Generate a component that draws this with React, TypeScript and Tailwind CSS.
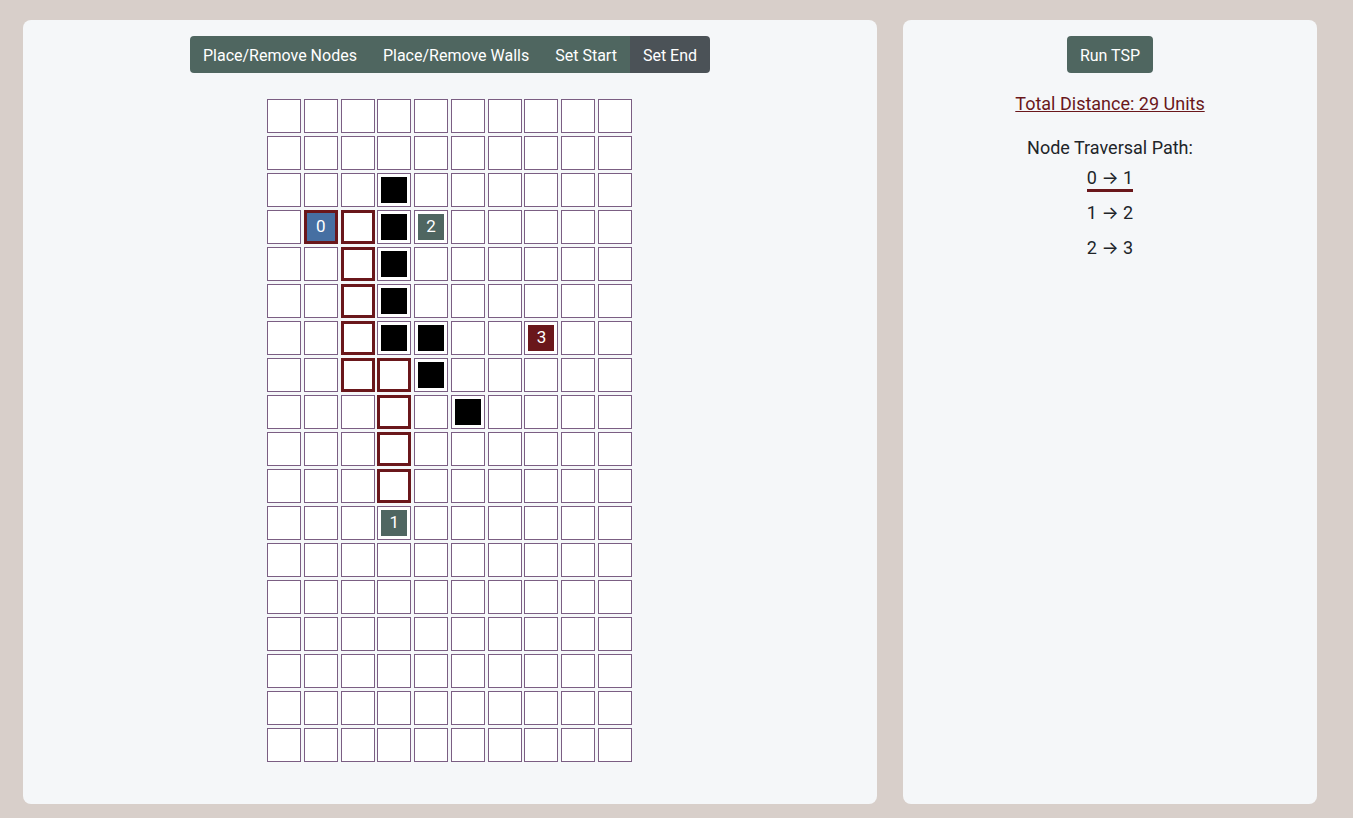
import React from "react";

const walls = new Set(["2,3", "3,3", "4,3", "5,3", "6,3", "6,4", "7,4", "8,5"]);
const paths = new Set(["3,1", "3,2", "4,2", "5,2", "6,2", "7,2", "7,3", "8,3", "9,3", "10,3"]);
const nodes: Record<string, { label: string; color: string }> = {
  "3,1": { label: "0", color: "bg-[#466fa2]" },
  "3,4": { label: "2", color: "bg-[#4f6661]" },
  "11,3": { label: "1", color: "bg-[#4f6661]" },
  "6,7": { label: "3", color: "bg-[#6a171b]" },
};

function Cell({ r, c }: { r: number; c: number }) {
  const key = `${r},${c}`;
  const isPath = paths.has(key);
  const node = nodes[key];
  const isWall = walls.has(key);
  if (isPath) {
    return (
      <div className="w-[34px] h-[34px] border-[3px] border-[#6a171b] bg-white flex items-center justify-center">
        {node ? (
          <div className={`w-full h-full ${node.color} flex items-center justify-center text-white text-[17px]`}>
            {node.label}
          </div>
        ) : null}
      </div>
    );
  }
  return (
    <div className="w-[34px] h-[34px] border border-[#7b5e83] bg-white p-[3px]">
      {isWall ? <div className="w-full h-full bg-black" /> : null}
      {node ? (
        <div className={`w-full h-full ${node.color} flex items-center justify-center text-white text-[17px]`}>
          {node.label}
        </div>
      ) : null}
    </div>
  );
}

function Step({ a, b }: { a: string; b: string }) {
  return (
    <>
      {a} <span style={{ fontFamily: "Inter, sans-serif" }}>→</span> {b}
    </>
  );
}

export default function App() {
  const rows = Array.from({ length: 18 }, (_, i) => i);
  const cols = Array.from({ length: 10 }, (_, i) => i);
  return (
    <div
      className="w-[1353px] h-[818px] bg-[#d8cfca] pl-[23px] pt-[20px] flex gap-[26px] text-[#212529]"
      style={{ fontFamily: "Roboto, 'Noto Sans', sans-serif" }}
    >
      <div className="w-[854px] h-[784px] bg-[#f5f7f9] rounded-[8px] flex flex-col items-center pt-[16px]">
        <div className="flex h-[37px] rounded-[4px] overflow-hidden text-[16px] text-white">
          <div className="bg-[#4f6660] px-[13px] pt-[2px] flex items-center">Place/Remove Nodes</div>
          <div className="bg-[#4f6660] px-[13px] pt-[2px] flex items-center">Place/Remove Walls</div>
          <div className="bg-[#4f6660] px-[13px] pt-[2px] flex items-center">Set Start</div>
          <div className="bg-[#4b5257] px-[13px] pt-[2px] flex items-center">Set End</div>
        </div>
        <div className="mt-[26px] ml-[-1px] grid grid-cols-[repeat(10,34px)] gap-x-[2.8px] gap-y-[3px]">
          {rows.map((r) => cols.map((c) => <Cell key={`${r}-${c}`} r={r} c={c} />))}
        </div>
      </div>
      <div className="w-[414px] h-[784px] bg-[#f5f7f9] rounded-[8px] flex flex-col items-center pt-[16px] text-[18px]">
        <div className="h-[37px] px-[13px] pt-[2px] bg-[#4f6660] text-white rounded-[4px] flex items-center text-[16px]">Run TSP</div>
        <div className="mt-[19px] text-[#6a171b] underline leading-[24px]">Total Distance: 29 Units</div>
        <div className="mt-[20px] leading-[24px]">Node Traversal Path:</div>
        <div className="mt-[7px] leading-[22px] border-b-[3px] border-[#6a171b]"><Step a="0" b="1" /></div>
        <div className="mt-[9px] leading-[24px]"><Step a="1" b="2" /></div>
        <div className="mt-[11px] leading-[24px]"><Step a="2" b="3" /></div>
      </div>
    </div>
  );
}
